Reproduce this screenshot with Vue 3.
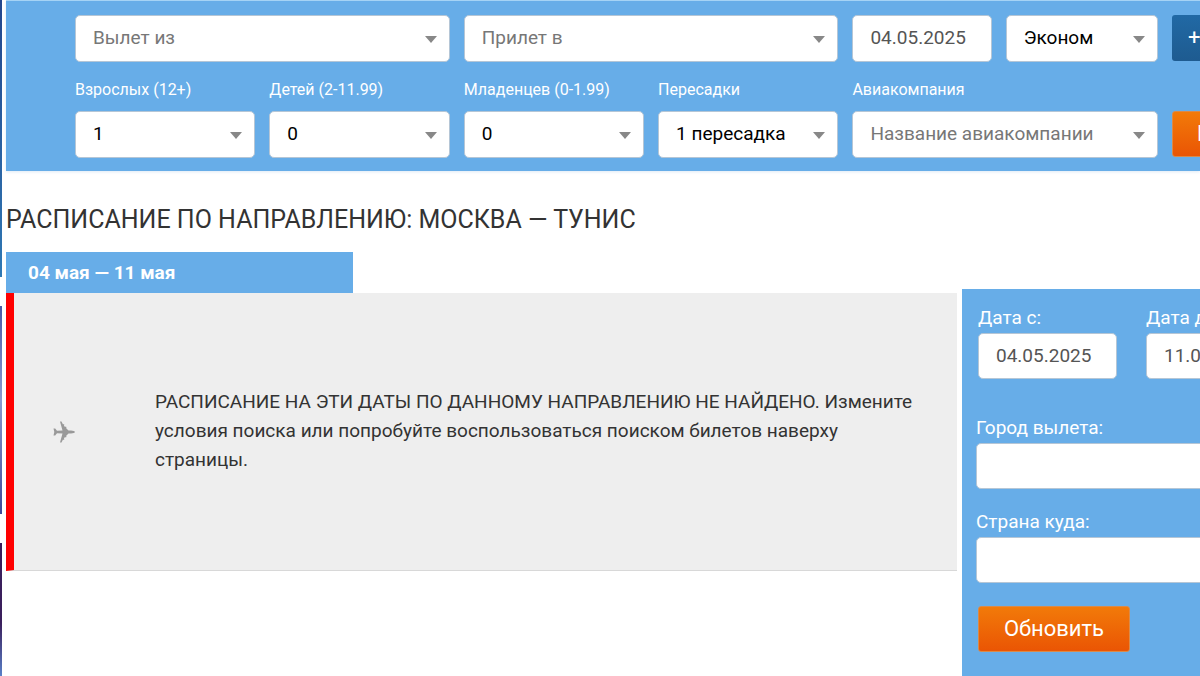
<template>
    <div class="page">
        <aside class="banners">
            <div class="banner banner-top"></div>
            <div class="banner banner-middle"></div>
            <div class="banner banner-bottom"></div>
        </aside>

        <main class="main">
            <form class="search" @submit.prevent>
                <div class="select wide">
                    <select v-model="search.from" class="control" :class="{ empty: !search.from }" aria-label="Вылет из">
                        <option value="">Вылет из</option>
                    </select>
                </div>
                <div class="select wide">
                    <select v-model="search.to" class="control" :class="{ empty: !search.to }" aria-label="Прилет в">
                        <option value="">Прилет в</option>
                    </select>
                </div>
                <input v-model="search.date" class="control date" type="text" aria-label="Дата вылета" />
                <div class="select">
                    <select v-model="search.cabin" class="control" aria-label="Класс">
                        <option>Эконом</option>
                    </select>
                </div>
                <button type="button" class="btn btn-blue">+</button>

                <div v-for="item in passengers" :key="item.id" class="field">
                    <label :for="item.id">{{ item.label }}</label>
                    <div class="select">
                        <select :id="item.id" v-model="item.value" class="control">
                            <option v-for="option in item.options" :key="option">{{ option }}</option>
                        </select>
                    </div>
                </div>
                <div class="field wide">
                    <label for="airline">Авиакомпания</label>
                    <div class="select">
                        <select id="airline" v-model="search.airline" class="control" :class="{ empty: !search.airline }">
                            <option value="">Название авиакомпании</option>
                        </select>
                    </div>
                </div>
                <button type="submit" class="btn btn-orange btn-search">Найти</button>
            </form>

            <h1>РАСПИСАНИЕ ПО НАПРАВЛЕНИЮ: МОСКВА — ТУНИС</h1>

            <div class="content">
                <section class="results">
                    <h2>04 мая — 11 мая</h2>
                    <div class="notice">
                        <div class="notice-icon">
                            <svg viewBox="0 0 22 22" width="22" height="22" aria-hidden="true">
                                <path d="M22 11c0 .7-2 1.300-4 1.500h-2.500L13 15l.6.8-.8.7-.8-.4-1.100 1.500.5.7-.8.6-.6-.3L8.500 21.500H7L9.500 12.500 4 12.200 2.200 14.500H.5L1.300 11 .5 7.500h1.700L4 9.800l5.500-.3L7 .500h1.500L10 3.400l.6-.3.8.6-.5.7L12 5.900l.8-.4.8.7-.6.8 2.500 2.500H18c2 .2 4 .8 4 1.500z" />
                            </svg>
                        </div>
                        <p>РАСПИСАНИЕ НА ЭТИ ДАТЫ ПО ДАННОМУ НАПРАВЛЕНИЮ НЕ НАЙДЕНО. Измените условия поиска или попробуйте воспользоваться поиском билетов наверху страницы.</p>
                    </div>
                </section>

                <form class="filter" @submit.prevent>
                    <div class="filter-dates">
                        <div class="filter-field">
                            <label for="date-from">Дата с:</label>
                            <input id="date-from" v-model="filter.dateFrom" class="control date" type="text" />
                        </div>
                        <div class="filter-field">
                            <label for="date-to">Дата до:</label>
                            <input id="date-to" v-model="filter.dateTo" class="control date" type="text" />
                        </div>
                    </div>
                    <div class="filter-field">
                        <label for="city">Город вылета:</label>
                        <input id="city" v-model="filter.city" class="control" type="text" />
                    </div>
                    <div class="filter-field">
                        <label for="country">Страна куда:</label>
                        <input id="country" v-model="filter.country" class="control" type="text" />
                    </div>
                    <button type="submit" class="btn btn-orange btn-update">Обновить</button>
                </form>
            </div>
        </main>
    </div>
</template>

<script setup>
import { reactive } from 'vue'

const search = reactive({
    from: '',
    to: '',
    date: '04.05.2025',
    cabin: 'Эконом',
    airline: ''
})

const passengers = reactive([
    { id: 'adults', label: 'Взрослых (12+)', value: '1', options: ['1', '2', '3', '4'] },
    { id: 'children', label: 'Детей (2-11.99)', value: '0', options: ['0', '1', '2', '3'] },
    { id: 'infants', label: 'Младенцев (0-1.99)', value: '0', options: ['0', '1', '2'] },
    { id: 'stops', label: 'Пересадки', value: '1 пересадка', options: ['1 пересадка'] }
])

const filter = reactive({
    dateFrom: '04.05.2025',
    dateTo: '11.05.2025',
    city: '',
    country: ''
})
</script>

<style>
body {
    background: #fff;
}
</style>

<style scoped>
.page {
    display: flex;
    gap: 4px;
    min-height: 100vh;
    overflow: hidden;
    font-family: Roboto, 'Liberation Sans', sans-serif;
    font-size: 19px;
    color: #333;
}

.page * {
    box-sizing: border-box;
}

/* Баннеры слева */
.banners {
    flex: 0 0 2px;
    display: flex;
    flex-direction: column;
    gap: 29px;
}

.banner-top {
    flex: 277;
    background: linear-gradient(#24468c, #2f78b4);
}

.banner-middle {
    flex: 208;
    background: linear-gradient(#4a5ba8, #8a9bd0 45%, #3d4a98);
}

.banner-bottom {
    flex: 133;
    background: linear-gradient(#3a1f5c 60%, #5a80c8);
}

.main {
    flex: 1;
    min-width: 0;
    display: flex;
    flex-direction: column;
}

/* Форма поиска */
.search {
    display: grid;
    grid-template-columns: repeat(4, 180fr) 139fr 152fr 28px;
    gap: 18px 14px;
    padding: 14px 0 13px 69px;
    border-top: 1px solid #a5d3f5;
    background: #67ade8;
    box-shadow: 0 1px 3px #dfeaf5;
}

.wide {
    grid-column: span 2;
}

.field label {
    display: block;
    margin-bottom: 11px;
    font-size: 16px;
    line-height: 20px;
    color: #fff;
    white-space: nowrap;
}

.select {
    position: relative;
}

.select::after {
    content: '';
    position: absolute;
    top: 21px;
    right: 13px;
    border: 6px solid transparent;
    border-top: 7px solid #888;
    border-bottom: 0;
    pointer-events: none;
}

.control {
    display: block;
    width: 100%;
    height: 47px;
    margin: 0;
    padding: 0 17px 2px;
    border: 1px solid #b5c6d6;
    border-radius: 5px;
    background: #fff;
    font-family: inherit;
    font-size: 19px;
    color: #000;
    appearance: none;
    outline: none;
}

.control.empty {
    color: #777;
}

.control.date {
    color: #555;
}

.btn {
    height: 46px;
    padding: 0 0 2px;
    border: 0;
    border-radius: 3px;
    font-family: inherit;
    font-size: 22px;
    color: #fff;
    cursor: pointer;
}

.btn-blue {
    width: 160px;
    padding-left: 16px;
    background: linear-gradient(#2169a5, #1e5b90);
    text-align: left;
}

.btn-orange {
    border: 1px solid #d98a4a;
    background: linear-gradient(#f27a09, #ea5504);
}

.btn-search {
    align-self: end;
    width: 160px;
    margin-bottom: 1px;
    padding-left: 24px;
    text-align: left;
    text-transform: uppercase;
}

h1 {
    margin: 34px 0 17px;
    font-size: 25px;
    font-weight: 400;
    line-height: 30px;
}

/* Результаты */
.content {
    flex: 1;
    display: flex;
    gap: 5px;
}

.results {
    flex: 1;
    min-width: 0;
}

h2 {
    width: 36.5%;
    margin: 0;
    padding: 0 22px;
    background: #67ade8;
    font-size: 19px;
    font-weight: 700;
    line-height: 41px;
    color: #fff;
}

.notice {
    display: flex;
    align-items: center;
    min-height: 278px;
    border-left: 8px solid #f00;
    border-bottom: 1px solid #d8d8d8;
    background: #eee;
}

.notice-icon {
    flex: 0 0 141px;
    padding-left: 39px;
}

.notice-icon svg {
    display: block;
    fill: #999;
}

.notice p {
    margin: 0;
    padding: 0 28px 2px 0;
    line-height: 29px;
}

/* Фильтр справа */
.filter {
    flex: 0 0 238px;
    min-width: 0;
    display: flex;
    flex-direction: column;
    align-items: flex-start;
    gap: 18px;
    margin-top: 37px;
    padding: 14px 0 24px 14px;
    background: #67ade8;
}

.filter-dates {
    display: flex;
    gap: 29px;
    margin-bottom: 16px;
    padding-left: 2px;
}

.filter-field {
    width: 320px;
}

.filter-dates .filter-field {
    width: 139px;
}

.filter-field label {
    display: block;
    line-height: 30px;
    color: #fff;
}

.filter-field .control {
    height: 46px;
}

.btn-update {
    width: 152px;
    margin: 5px 0 0 2px;
}
</style>
